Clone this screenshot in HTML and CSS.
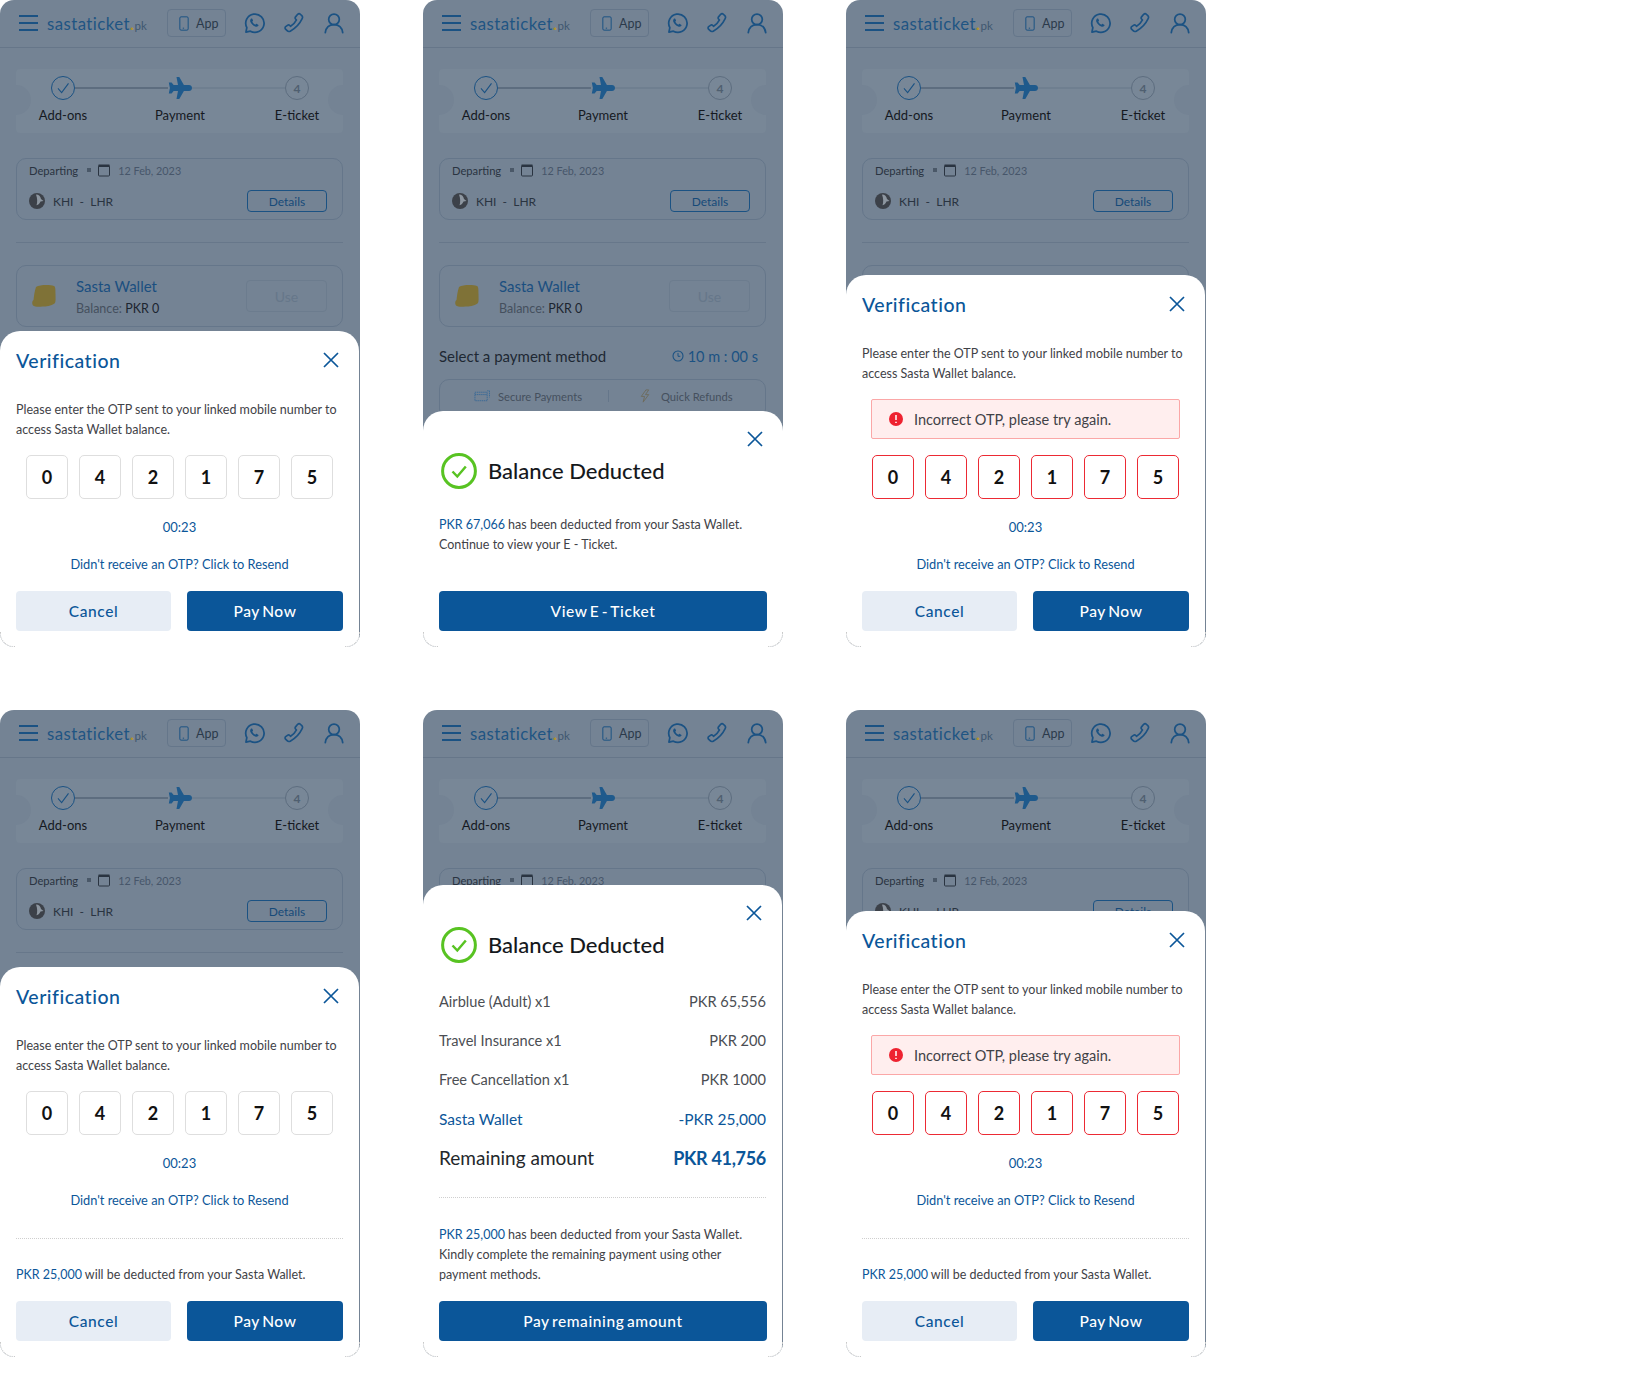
FILE: index.html
```html
<!DOCTYPE html>
<html lang="en">
  <head>
    <meta charset="UTF-8" />
    <meta name="viewport" content="width=device-width, initial-scale=1.0" />
    <title>Sasta Wallet payment states</title>
    <link rel="stylesheet" href="styles.css">
  </head>
  <body>
    <!-- Shared icons -->
    <svg class="icon-defs" aria-hidden="true">
      <symbol id="i-mobile" viewBox="0 0 12 18"><rect x="1" y="1" width="10" height="16" rx="1.5" fill="none" stroke="currentColor" stroke-width="1.2"/><path d="M4.5 14.6h1.6" stroke="currentColor" stroke-width="1.2"/></symbol>
      <symbol id="i-whatsapp" viewBox="0 0 24 24"><path d="M3.2 22l1-5A10 10 0 1 1 8 20.9z" fill="none" stroke="currentColor" stroke-width="1.9" stroke-linejoin="round"/><path d="M8.6 7.4c.5-.5 1.3-.5 1.6.1l.7 1.5c.1.3 0 .6-.2.9l-.6.7c.7 1.400 1.800 2.500 3.300 3.200l.8-.7c.3-.2.600-.3.900-.1l1.400.8c.5.300.6 1 .1 1.500-.9.900-2.100 1.100-3.300.6-2.500-1-4.300-2.800-5.300-5.200-.4-1-.2-2.300.6-3.300z" fill="currentColor"/></symbol>
      <symbol id="i-phone" viewBox="0 0 24 24"><path d="M16 2.500c1-.9 2.300-.7 3.200.2l1.300 1.300c.9.900 1 2.200.4 3.300-2.600 5.500-7.300 10.600-13 13.600-1.200.6-2.500.4-3.400-.5l-1.700-1.700c-.8-.8-.7-2 .1-2.700l2-1.500c.8-.6 1.800-.5 2.500.2l.9.9c2.800-1.700 5-4.100 6.400-6.900l-.8-.8c-.7-.7-.8-1.800-.2-2.600z" fill="none" stroke="currentColor" stroke-width="1.800" stroke-linejoin="round"/></symbol>
      <symbol id="i-user" viewBox="0 0 24 24"><circle cx="12" cy="8" r="5.800" fill="none" stroke="currentColor" stroke-width="1.900"/><path d="M2.500 22.500c.8-5.500 4.600-8.700 9.500-8.700s8.700 3.200 9.500 8.700" fill="none" stroke="currentColor" stroke-width="1.900" stroke-linecap="round"/></symbol>
      <symbol id="i-plane" viewBox="0 0 24 24"><path d="M8.500 1h2.800l4.600 8h5.100c1.600 0 3 1.300 3 3s-1.400 3-3 3h-5.100l-4.600 8H8.500l1.500-8H5.600l-2 2.500H0.800l1.100-5.500L.8 6.500h2.800l2 2.500H10z" fill="currentColor"/></symbol>
      <symbol id="i-calendar" viewBox="0 0 14 14"><rect x="1.500" y="2.500" width="11" height="10.500" rx="1" fill="none" stroke="currentColor" stroke-width="1"/><path d="M1.500 1.500h11v2.500h-11z" fill="currentColor"/></symbol>
      <symbol id="i-airline" viewBox="0 0 16 16"><circle cx="8" cy="8" r="8" fill="#3c4149"/><path d="M7 1.500c3 0 4.500 2 5 4.500l2.500 2-3 .5c-.8 2-2 3.200-4 3.700 1-2.500 1-7 -.5-10.700z" fill="#8d96a0"/></symbol>
      <symbol id="i-coin" viewBox="0 0 24 24"><path d="M4 3C8 .5 18 .5 22 2c1.500.5 1.500 4 1.500 8s.5 8-1 9.500c-3 2.500-9 3-12 3-3 .3-8 .5-9.500-1-1.200-1.500-1-4.500.5-5.500.5-4 1-9 2.500-13z" fill="#7f7237"/></symbol>
      <symbol id="i-close" viewBox="0 0 16 16"><path d="M1 1l14 14M15 1L1 15" stroke="currentColor" stroke-width="1.700" fill="none"/></symbol>
      <symbol id="i-success" viewBox="0 0 36 36"><circle cx="18" cy="18" r="16.400" fill="none" stroke="#58c322" stroke-width="3"/><path d="M11.500 18.500l4.800 5 8.500-10" fill="none" stroke="#58c322" stroke-width="2.500"/></symbol>
      <symbol id="i-error" viewBox="0 0 14 14"><circle cx="7" cy="7" r="7" fill="#ee2230"/><path d="M7 3v5M7 9.700v1.400" stroke="#fff" stroke-width="1.500"/></symbol>
      <symbol id="i-clock" viewBox="0 0 12 12"><circle cx="6" cy="6" r="5" fill="none" stroke="currentColor" stroke-width="1.100"/><path d="M6 3v3.300h2.300" fill="none" stroke="currentColor" stroke-width="1"/></symbol>
      <symbol id="i-card" viewBox="0 0 17 14"><path d="M1 3h13v9H1zM1 5.500h13M14 1.500h2.500v7" fill="none" stroke="currentColor" stroke-width="1" stroke-dasharray="1.500 .7"/></symbol>
      <symbol id="i-bolt" viewBox="0 0 12 15"><path d="M7 1L2 8h3.500L4 14l6-8H6.500L10 1z" fill="none" stroke="currentColor" stroke-width="1"/></symbol>
    </svg>

    <main class="board">
      <!-- Top left: OTP -->
      <section class="phone">
        <header class="topbar">
          <div class="burger"><span></span><span></span><span></span></div>
          <div class="logo">sastaticket<b>.</b><small>pk</small></div>
          <div class="app-btn"><svg class="app-btn__icon"><use href="#i-mobile"/></svg>App</div>
          <svg class="topbar__icon"><use href="#i-whatsapp"/></svg>
          <svg class="topbar__icon"><use href="#i-phone"/></svg>
          <svg class="topbar__icon"><use href="#i-user"/></svg>
        </header>
        <div class="stepper">
          <div class="step step--done"><span class="step__mark"><svg viewBox="0 0 24 24"><path d="M6.500 12.500l4 4.500 7.500-10" fill="none" stroke="currentColor" stroke-width="1.200"/></svg></span><span class="step__label">Add-ons</span></div>
          <div class="step step--now"><svg class="step__plane"><use href="#i-plane"/></svg><span class="step__label">Payment</span></div>
          <div class="step step--todo"><span class="step__mark">4</span><span class="step__label">E-ticket</span></div>
        </div>
        <div class="flight">
          <div class="flight__row"><span class="flight__tag">Departing</span><i class="flight__dot"></i><svg class="flight__cal"><use href="#i-calendar"/></svg><span class="flight__date">12 Feb, 2023</span></div>
          <div class="flight__row flight__row--main"><svg class="flight__airline"><use href="#i-airline"/></svg><span class="flight__route">KHI &nbsp;-&nbsp; LHR</span><span class="flight__details">Details</span></div>
        </div>
        <hr class="page-rule">
        <div class="wallet">
          <svg class="wallet__coin"><use href="#i-coin"/></svg>
          <div class="wallet__info"><div class="wallet__name">Sasta Wallet</div><div class="wallet__bal">Balance: <b>PKR 0</b></div></div>
          <span class="wallet__use">Use</span>
        </div>

        <div class="sheet">
          <div class="sheet__head"><h2 class="sheet__title">Verification</h2><svg class="sheet__close"><use href="#i-close"/></svg></div>
          <p class="copy">Please enter the OTP sent to your linked mobile number to access Sasta Wallet balance.</p>
          <div class="otp"><span>0</span><span>4</span><span>2</span><span>1</span><span>7</span><span>5</span></div>
          <div class="timer">00:23</div>
          <div class="resend">Didn't receive an OTP? Click to Resend</div>
          <div class="actions"><button type="button" class="btn btn--soft">Cancel</button><button type="button" class="btn">Pay Now</button></div>
        </div>
      </section>

      <!-- Top middle: fully paid -->
      <section class="phone">
        <header class="topbar">
          <div class="burger"><span></span><span></span><span></span></div>
          <div class="logo">sastaticket<b>.</b><small>pk</small></div>
          <div class="app-btn"><svg class="app-btn__icon"><use href="#i-mobile"/></svg>App</div>
          <svg class="topbar__icon"><use href="#i-whatsapp"/></svg>
          <svg class="topbar__icon"><use href="#i-phone"/></svg>
          <svg class="topbar__icon"><use href="#i-user"/></svg>
        </header>
        <div class="stepper">
          <div class="step step--done"><span class="step__mark"><svg viewBox="0 0 24 24"><path d="M6.500 12.500l4 4.500 7.500-10" fill="none" stroke="currentColor" stroke-width="1.200"/></svg></span><span class="step__label">Add-ons</span></div>
          <div class="step step--now"><svg class="step__plane"><use href="#i-plane"/></svg><span class="step__label">Payment</span></div>
          <div class="step step--todo"><span class="step__mark">4</span><span class="step__label">E-ticket</span></div>
        </div>
        <div class="flight">
          <div class="flight__row"><span class="flight__tag">Departing</span><i class="flight__dot"></i><svg class="flight__cal"><use href="#i-calendar"/></svg><span class="flight__date">12 Feb, 2023</span></div>
          <div class="flight__row flight__row--main"><svg class="flight__airline"><use href="#i-airline"/></svg><span class="flight__route">KHI &nbsp;-&nbsp; LHR</span><span class="flight__details">Details</span></div>
        </div>
        <hr class="page-rule">
        <div class="wallet">
          <svg class="wallet__coin"><use href="#i-coin"/></svg>
          <div class="wallet__info"><div class="wallet__name">Sasta Wallet</div><div class="wallet__bal">Balance: <b>PKR 0</b></div></div>
          <span class="wallet__use">Use</span>
        </div>
        <div class="method"><span class="method__title">Select a payment method</span><span class="method__timer"><svg><use href="#i-clock"/></svg>10 m : 00 s</span></div>
        <div class="perks"><span class="perks__item"><svg><use href="#i-card"/></svg>Secure Payments</span><i class="perks__sep"></i><span class="perks__item"><svg><use href="#i-bolt"/></svg>Quick Refunds</span></div>

        <div class="sheet sheet--full">
          <div class="sheet__top"><svg class="sheet__close"><use href="#i-close"/></svg></div>
          <div class="done"><svg class="done__icon"><use href="#i-success"/></svg><h2 class="done__title">Balance Deducted</h2></div>
          <p class="copy copy--done"><em>PKR 67,066</em> has been deducted from your Sasta Wallet.<br>Continue to view your E - Ticket.</p>
          <div class="actions actions--single"><button type="button" class="btn">View E - Ticket</button></div>
        </div>
      </section>

      <!-- Top right: wrong OTP -->
      <section class="phone">
        <header class="topbar">
          <div class="burger"><span></span><span></span><span></span></div>
          <div class="logo">sastaticket<b>.</b><small>pk</small></div>
          <div class="app-btn"><svg class="app-btn__icon"><use href="#i-mobile"/></svg>App</div>
          <svg class="topbar__icon"><use href="#i-whatsapp"/></svg>
          <svg class="topbar__icon"><use href="#i-phone"/></svg>
          <svg class="topbar__icon"><use href="#i-user"/></svg>
        </header>
        <div class="stepper">
          <div class="step step--done"><span class="step__mark"><svg viewBox="0 0 24 24"><path d="M6.500 12.500l4 4.500 7.500-10" fill="none" stroke="currentColor" stroke-width="1.200"/></svg></span><span class="step__label">Add-ons</span></div>
          <div class="step step--now"><svg class="step__plane"><use href="#i-plane"/></svg><span class="step__label">Payment</span></div>
          <div class="step step--todo"><span class="step__mark">4</span><span class="step__label">E-ticket</span></div>
        </div>
        <div class="flight">
          <div class="flight__row"><span class="flight__tag">Departing</span><i class="flight__dot"></i><svg class="flight__cal"><use href="#i-calendar"/></svg><span class="flight__date">12 Feb, 2023</span></div>
          <div class="flight__row flight__row--main"><svg class="flight__airline"><use href="#i-airline"/></svg><span class="flight__route">KHI &nbsp;-&nbsp; LHR</span><span class="flight__details">Details</span></div>
        </div>
        <hr class="page-rule">
        <div class="wallet"></div>

        <div class="sheet">
          <div class="sheet__head"><h2 class="sheet__title">Verification</h2><svg class="sheet__close"><use href="#i-close"/></svg></div>
          <p class="copy">Please enter the OTP sent to your linked mobile number to access Sasta Wallet balance.</p>
          <div class="alert"><svg class="alert__icon"><use href="#i-error"/></svg>Incorrect OTP, please try again.</div>
          <div class="otp otp--error"><span>0</span><span>4</span><span>2</span><span>1</span><span>7</span><span>5</span></div>
          <div class="timer">00:23</div>
          <div class="resend">Didn't receive an OTP? Click to Resend</div>
          <div class="actions"><button type="button" class="btn btn--soft">Cancel</button><button type="button" class="btn">Pay Now</button></div>
        </div>
      </section>

      <!-- Bottom left: OTP with partial note -->
      <section class="phone">
        <header class="topbar">
          <div class="burger"><span></span><span></span><span></span></div>
          <div class="logo">sastaticket<b>.</b><small>pk</small></div>
          <div class="app-btn"><svg class="app-btn__icon"><use href="#i-mobile"/></svg>App</div>
          <svg class="topbar__icon"><use href="#i-whatsapp"/></svg>
          <svg class="topbar__icon"><use href="#i-phone"/></svg>
          <svg class="topbar__icon"><use href="#i-user"/></svg>
        </header>
        <div class="stepper">
          <div class="step step--done"><span class="step__mark"><svg viewBox="0 0 24 24"><path d="M6.500 12.500l4 4.500 7.500-10" fill="none" stroke="currentColor" stroke-width="1.200"/></svg></span><span class="step__label">Add-ons</span></div>
          <div class="step step--now"><svg class="step__plane"><use href="#i-plane"/></svg><span class="step__label">Payment</span></div>
          <div class="step step--todo"><span class="step__mark">4</span><span class="step__label">E-ticket</span></div>
        </div>
        <div class="flight">
          <div class="flight__row"><span class="flight__tag">Departing</span><i class="flight__dot"></i><svg class="flight__cal"><use href="#i-calendar"/></svg><span class="flight__date">12 Feb, 2023</span></div>
          <div class="flight__row flight__row--main"><svg class="flight__airline"><use href="#i-airline"/></svg><span class="flight__route">KHI &nbsp;-&nbsp; LHR</span><span class="flight__details">Details</span></div>
        </div>
        <hr class="page-rule">

        <div class="sheet">
          <div class="sheet__head"><h2 class="sheet__title">Verification</h2><svg class="sheet__close"><use href="#i-close"/></svg></div>
          <p class="copy">Please enter the OTP sent to your linked mobile number to access Sasta Wallet balance.</p>
          <div class="otp"><span>0</span><span>4</span><span>2</span><span>1</span><span>7</span><span>5</span></div>
          <div class="timer">00:23</div>
          <div class="resend">Didn't receive an OTP? Click to Resend</div>
          <hr class="sheet__rule">
          <p class="copy copy--note"><em>PKR 25,000</em> will be deducted from your Sasta Wallet.</p>
          <div class="actions"><button type="button" class="btn btn--soft">Cancel</button><button type="button" class="btn">Pay Now</button></div>
        </div>
      </section>

      <!-- Bottom middle: partly paid -->
      <section class="phone">
        <header class="topbar">
          <div class="burger"><span></span><span></span><span></span></div>
          <div class="logo">sastaticket<b>.</b><small>pk</small></div>
          <div class="app-btn"><svg class="app-btn__icon"><use href="#i-mobile"/></svg>App</div>
          <svg class="topbar__icon"><use href="#i-whatsapp"/></svg>
          <svg class="topbar__icon"><use href="#i-phone"/></svg>
          <svg class="topbar__icon"><use href="#i-user"/></svg>
        </header>
        <div class="stepper">
          <div class="step step--done"><span class="step__mark"><svg viewBox="0 0 24 24"><path d="M6.500 12.500l4 4.500 7.500-10" fill="none" stroke="currentColor" stroke-width="1.200"/></svg></span><span class="step__label">Add-ons</span></div>
          <div class="step step--now"><svg class="step__plane"><use href="#i-plane"/></svg><span class="step__label">Payment</span></div>
          <div class="step step--todo"><span class="step__mark">4</span><span class="step__label">E-ticket</span></div>
        </div>
        <div class="flight">
          <div class="flight__row"><span class="flight__tag">Departing</span><i class="flight__dot"></i><svg class="flight__cal"><use href="#i-calendar"/></svg><span class="flight__date">12 Feb, 2023</span></div>
        </div>

        <div class="sheet">
          <div class="sheet__top"><svg class="sheet__close"><use href="#i-close"/></svg></div>
          <div class="done"><svg class="done__icon"><use href="#i-success"/></svg><h2 class="done__title">Balance Deducted</h2></div>
          <div class="bill">
            <div class="bill__row"><span>Airblue (Adult) x1</span><span>PKR 65,556</span></div>
            <div class="bill__row"><span>Travel Insurance x1</span><span>PKR 200</span></div>
            <div class="bill__row"><span>Free Cancellation x1</span><span>PKR 1000</span></div>
            <div class="bill__row bill__row--wallet"><span>Sasta Wallet</span><span>-PKR 25,000</span></div>
            <div class="bill__row bill__row--total"><span>Remaining amount</span><span>PKR 41,756</span></div>
          </div>
          <hr class="sheet__rule sheet__rule--bill">
          <p class="copy copy--note copy--bill"><em>PKR 25,000</em> has been deducted from your Sasta Wallet. Kindly complete the remaining payment using other payment methods.</p>
          <div class="actions actions--single"><button type="button" class="btn">Pay remaining amount</button></div>
        </div>
      </section>

      <!-- Bottom right: wrong OTP with partial note -->
      <section class="phone">
        <header class="topbar">
          <div class="burger"><span></span><span></span><span></span></div>
          <div class="logo">sastaticket<b>.</b><small>pk</small></div>
          <div class="app-btn"><svg class="app-btn__icon"><use href="#i-mobile"/></svg>App</div>
          <svg class="topbar__icon"><use href="#i-whatsapp"/></svg>
          <svg class="topbar__icon"><use href="#i-phone"/></svg>
          <svg class="topbar__icon"><use href="#i-user"/></svg>
        </header>
        <div class="stepper">
          <div class="step step--done"><span class="step__mark"><svg viewBox="0 0 24 24"><path d="M6.500 12.500l4 4.500 7.500-10" fill="none" stroke="currentColor" stroke-width="1.200"/></svg></span><span class="step__label">Add-ons</span></div>
          <div class="step step--now"><svg class="step__plane"><use href="#i-plane"/></svg><span class="step__label">Payment</span></div>
          <div class="step step--todo"><span class="step__mark">4</span><span class="step__label">E-ticket</span></div>
        </div>
        <div class="flight">
          <div class="flight__row"><span class="flight__tag">Departing</span><i class="flight__dot"></i><svg class="flight__cal"><use href="#i-calendar"/></svg><span class="flight__date">12 Feb, 2023</span></div>
          <div class="flight__row flight__row--main"><svg class="flight__airline"><use href="#i-airline"/></svg><span class="flight__route">KHI &nbsp;-&nbsp; LHR</span><span class="flight__details">Details</span></div>
        </div>

        <div class="sheet">
          <div class="sheet__head"><h2 class="sheet__title">Verification</h2><svg class="sheet__close"><use href="#i-close"/></svg></div>
          <p class="copy">Please enter the OTP sent to your linked mobile number to access Sasta Wallet balance.</p>
          <div class="alert"><svg class="alert__icon"><use href="#i-error"/></svg>Incorrect OTP, please try again.</div>
          <div class="otp otp--error"><span>0</span><span>4</span><span>2</span><span>1</span><span>7</span><span>5</span></div>
          <div class="timer">00:23</div>
          <div class="resend">Didn't receive an OTP? Click to Resend</div>
          <hr class="sheet__rule">
          <p class="copy copy--note"><em>PKR 25,000</em> will be deducted from your Sasta Wallet.</p>
          <div class="actions"><button type="button" class="btn btn--soft">Cancel</button><button type="button" class="btn">Pay Now</button></div>
        </div>
      </section>
    </main>
  </body>
</html>
```

FILE: styles.css
```css
* {
  box-sizing: border-box;
}

body {
  margin: 0;
  background: #fff;
  font-family: "Lato", "Liberation Sans", sans-serif;
  color: #3f4247;
}

.icon-defs {
  display: none;
}

.board {
  display: grid;
  grid-template-columns: repeat(3, 360px);
  grid-auto-rows: 647px;
  column-gap: 63px;
  row-gap: 63px;
}

/* Phone and the dimmed page behind the sheet */
.phone {
  position: relative;
  overflow: hidden;
  border-radius: 14px;
  background: #748394;
}

.phone::before,
.phone::after {
  content: "";
  position: absolute;
  bottom: 0;
  z-index: 2;
  width: 14px;
  height: 14px;
  border-bottom: 1px dotted #c9c9c9;
}

.phone::before {
  left: 0;
  border-left: 1px dotted #c9c9c9;
  border-bottom-left-radius: 14px;
}

.phone::after {
  right: 0;
  border-right: 1px dotted #c9c9c9;
  border-bottom-right-radius: 14px;
}

.topbar {
  display: flex;
  align-items: center;
  height: 48px;
  padding: 0 15px 1px 19px;
  border-bottom: 1px solid #667689;
  color: #1b5283;
}

.burger {
  display: flex;
  flex-direction: column;
  gap: 5px;
  width: 19px;
  margin-right: 9px;
}

.burger span {
  height: 2px;
  background: #1b5283;
}

.logo {
  width: 120px;
  font-size: 16.8px;
  letter-spacing: 0.45px;
  color: #1f5583;
}

.logo b {
  font-weight: 700;
  color: #b3952a;
}

.logo small {
  font-size: 11.5px;
  letter-spacing: 0;
  color: #3f5770;
}

.app-btn {
  display: flex;
  align-items: center;
  gap: 7px;
  width: 59px;
  height: 28px;
  margin-right: 17px;
  padding-left: 11px;
  border: 1px solid #65768a;
  border-radius: 4px;
  font-size: 12.5px;
  color: #2b3a4b;
}

.app-btn__icon {
  width: 10px;
  height: 15px;
  color: #1b5283;
}

.topbar__icon {
  width: 22px;
  height: 22px;
  margin-right: 18px;
  color: #1b5283;
}

.topbar__icon:last-child {
  margin-right: 0;
}

/* Stepper ticket */
.stepper {
  position: relative;
  overflow: hidden;
  display: grid;
  grid-template-columns: repeat(3, 94px);
  column-gap: 23px;
  height: 64px;
  margin: 21px 17px 0 16px;
  border-radius: 4px;
  background: #788797;
}

.stepper::before,
.stepper::after {
  content: "";
  position: absolute;
  top: 16px;
  width: 30px;
  height: 30px;
  border-radius: 50%;
  background: #748394;
}

.stepper::before {
  left: -15px;
}

.stepper::after {
  right: -15px;
}

.step {
  position: relative;
  display: flex;
  flex-direction: column;
  align-items: center;
  padding-top: 7px;
}

.step__mark {
  display: flex;
  align-items: center;
  justify-content: center;
  width: 24px;
  height: 24px;
  border: 1px solid #1b5283;
  border-radius: 50%;
  color: #1b5283;
}

.step__mark svg {
  width: 22px;
  height: 22px;
}

.step__plane {
  width: 24px;
  height: 24px;
  color: #1f5a8c;
}

.step__label {
  margin-top: 5px;
  font-size: 13px;
  line-height: 20px;
  color: #15191f;
}

.step--done::after,
.step--now::after {
  content: "";
  position: absolute;
  top: 18px;
  left: calc(50% + 12px);
  width: 93px;
  height: 2px;
  background: #5d6d7f;
}

.step--now::after {
  background: #6f7f90;
}

.step--todo .step__mark {
  border-color: #5d6d7f;
  font-size: 12px;
  font-weight: 700;
  color: #4f5f70;
}

/* Flight card */
.flight {
  height: 62px;
  margin: 25px 17px 0 16px;
  padding: 0 15px 0 12px;
  border: 1px solid #65768a;
  border-radius: 10px;
}

.flight__row {
  display: flex;
  align-items: center;
  height: 22px;
  font-size: 11.2px;
  color: #2a3441;
}

.flight__row--main {
  height: 24px;
  margin-top: 8px;
}

.flight__dot {
  width: 4px;
  height: 4px;
  margin: 0 6px 0 9px;
  background: #4a5868;
}

.flight__cal {
  width: 14px;
  height: 14px;
  margin-right: 7px;
  color: #2a3441;
}

.flight__date {
  font-size: 10.8px;
  color: #47566a;
}

.flight__airline {
  width: 16px;
  height: 16px;
  margin-right: 8px;
}

.flight__route {
  font-size: 12px;
}

.flight__details {
  display: flex;
  align-items: center;
  justify-content: center;
  width: 80px;
  height: 22px;
  margin-left: auto;
  border: 1px solid #1b5283;
  border-radius: 4px;
  font-size: 12px;
  color: #164a79;
}

.page-rule {
  height: 1px;
  margin: 22px 17px 0 16px;
  border: 0;
  background: #67778a;
}

/* Wallet card */
.wallet {
  display: flex;
  align-items: center;
  height: 62px;
  margin: 22px 17px 0 16px;
  padding: 0 15px;
  border: 1px solid #65768a;
  border-radius: 10px;
}

.wallet__coin {
  width: 24px;
  height: 24px;
  margin-right: 20px;
}

.wallet__info {
  padding-top: 2px;
}

.wallet__name {
  font-size: 15px;
  line-height: 22px;
  color: #1b4f80;
}

.wallet__bal {
  margin-top: 2px;
  font-size: 12.5px;
  line-height: 20px;
  color: #45505e;
}

.wallet__bal b {
  font-weight: 400;
  color: #1c2530;
}

.wallet__use {
  display: flex;
  align-items: center;
  justify-content: center;
  width: 81px;
  height: 32px;
  margin-left: auto;
  border: 1px solid #6c7c8e;
  border-radius: 4px;
  font-size: 14px;
  color: #66778a;
}

/* Payment method row */
.method {
  display: flex;
  justify-content: space-between;
  align-items: center;
  height: 20px;
  margin: 19px 25px 0 16px;
  font-size: 15px;
  color: #1e2833;
}

.method__timer {
  display: flex;
  align-items: center;
  gap: 4px;
  font-size: 14.5px;
  color: #1b5283;
}

.method__timer svg {
  width: 12px;
  height: 12px;
}

.perks {
  display: flex;
  align-items: center;
  height: 40px;
  margin: 13px 17px 0 16px;
  padding-bottom: 6px;
  border: 1px solid #65768a;
  border-radius: 10px;
  font-size: 11.2px;
  color: #45505e;
}

.perks__item {
  display: flex;
  align-items: center;
  gap: 8px;
}

.perks__item:first-child {
  margin-left: 34px;
}

.perks__sep {
  width: 1px;
  height: 12px;
  margin: 0 28px 0 26px;
  background: #65768a;
}

.perks__item svg {
  width: 16px;
  height: 14px;
  color: #3a6a96;
}

.perks__item + .perks__sep + .perks__item svg {
  color: #6e6c5c;
}

/* Bottom sheet */
.sheet {
  position: absolute;
  left: 0;
  right: 1px;
  bottom: 0;
  z-index: 1;
  padding: 0 16px 16px;
  border-radius: 20px 20px 0 0;
  background: #fff;
}

.sheet--full {
  right: 0;
}

.sheet__head {
  display: flex;
  justify-content: space-between;
  align-items: center;
  height: 30px;
  margin-top: 14px;
}

.sheet__title {
  margin: 0;
  font-size: 19.5px;
  font-weight: 500;
  letter-spacing: 0.5px;
  color: #0b5699;
}

.sheet__close {
  width: 16px;
  height: 16px;
  margin-right: 4px;
  color: #0b5699;
}

.sheet__top {
  display: flex;
  justify-content: flex-end;
  padding-top: 20px;
}

.copy {
  margin: 25px 0 0;
  font-size: 12.5px;
  line-height: 20px;
  color: #3f4247;
}

.copy em {
  font-style: normal;
  color: #0b5699;
}

.copy--done {
  margin-top: 26px;
}

.copy--note {
  margin-top: 26px;
}

.copy--bill {
  margin-top: 27px;
}

.otp {
  display: flex;
  justify-content: center;
  gap: 11px;
  margin-top: 15px;
}

.otp span {
  display: flex;
  align-items: center;
  justify-content: center;
  width: 42px;
  height: 44px;
  border: 1px solid #dedede;
  border-radius: 5px;
  font-size: 18px;
  font-weight: 700;
  color: #111;
}

.otp--error {
  margin-top: 16px;
}

.otp--error span {
  border-color: #ec2a34;
}

.alert {
  display: flex;
  align-items: center;
  gap: 11px;
  height: 40px;
  margin: 15px 9px 0;
  padding-left: 17px;
  border: 1px solid #fba7a7;
  border-radius: 2px;
  background: #ffeeee;
  font-size: 14.5px;
  color: #3f4247;
}

.alert__icon {
  width: 14px;
  height: 14px;
}

.timer {
  margin-top: 18px;
  font-size: 13px;
  line-height: 20px;
  text-align: center;
  color: #0b5699;
}

.resend {
  margin-top: 17px;
  font-size: 12.8px;
  line-height: 20px;
  text-align: center;
  color: #0b5699;
}

.actions {
  display: grid;
  grid-template-columns: 155px 156px;
  column-gap: 16px;
  margin-top: 17px;
}

.copy--note + .actions {
  margin-top: 16px;
}

.actions--single {
  grid-template-columns: 1fr;
  margin-top: 36px;
}

.copy--note + .actions--single {
  margin-top: 16px;
  margin-right: -1px;
}

.btn {
  height: 40px;
  padding-bottom: 2px;
  border: 0;
  border-radius: 4px;
  background: #0b5699;
  font-family: inherit;
  font-size: 15.5px;
  font-weight: 500;
  letter-spacing: 0.6px;
  word-spacing: -2px;
  color: #fff;
}

.btn--soft {
  background: #e7edf5;
  color: #0b5699;
}

.sheet__rule {
  height: 0;
  margin: 28px 0 0;
  border: 0;
  border-top: 1px dotted #cfcfcf;
}

.sheet__rule--bill {
  margin-top: 20px;
}

/* Balance deducted */
.done {
  display: flex;
  align-items: center;
  gap: 11px;
  height: 36px;
  margin-top: 6px;
  padding-left: 2px;
}

.done__icon {
  width: 36px;
  height: 36px;
}

.done__title {
  margin: 0 0 2px;
  font-size: 22px;
  font-weight: 500;
  color: #15181c;
}

.bill {
  margin-top: 19px;
}

.bill__row {
  display: flex;
  justify-content: space-between;
  align-items: center;
  height: 39px;
  font-size: 14.6px;
  color: #4b4e53;
}

.bill__row--wallet {
  font-size: 15.5px;
  color: #0b5699;
}

.bill__row--total {
  font-size: 19px;
  color: #23272b;
}

.bill__row--total span:last-child {
  font-size: 18px;
  font-weight: 700;
  letter-spacing: -0.3px;
  color: #0b5699;
}
```
